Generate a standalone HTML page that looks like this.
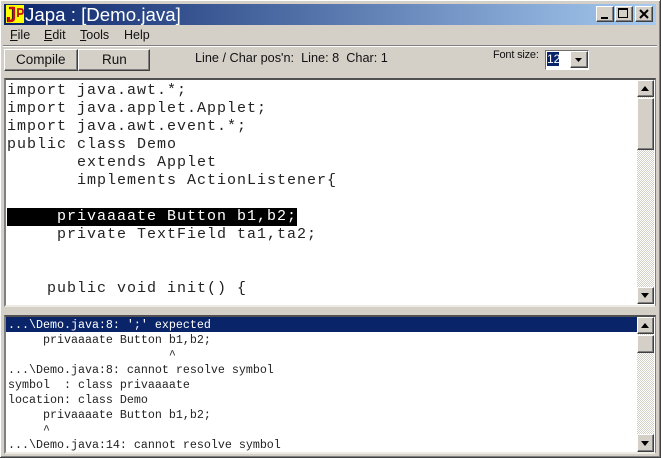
<!DOCTYPE html>
<html><head><meta charset="utf-8"><style>
html,body{margin:0;padding:0;width:661px;height:458px;overflow:hidden;background:#d4d0c8}
div,span{position:absolute;box-sizing:border-box}
#win{left:0;top:0;width:661px;height:458px;background:#d4d0c8;box-shadow:inset -1px -1px 0 #404040,inset 1px 1px 0 #fff,inset -2px -2px 0 #808080}
#in{left:0;top:1px;width:661px;height:457px}
.ui{font-family:"Liberation Sans",sans-serif;font-size:12.5px;color:#111;white-space:pre;line-height:14px}
.sep{height:2px;background:linear-gradient(#808080 50%,#fff 50%)}
.btn{background:#d4d0c8;border-top:1px solid #fff;border-left:1px solid #fff;border-right:1px solid #404040;border-bottom:1px solid #404040;box-shadow:inset -1px -1px 0 #808080}
.pane{background:#fff;border-top:2px solid #505050;border-left:2px solid #808080;border-right:1px solid #808080;border-bottom:2px solid #eeebe5}
.code{font-family:"Liberation Mono",monospace;font-size:15px;letter-spacing:1px;line-height:18px;white-space:pre;color:#222;left:7px;height:18px}
.out{font-family:"Liberation Mono",monospace;font-size:11.67px;line-height:15px;white-space:pre;color:#222;left:8px;height:15px}
.chk{background-color:#eeebe5;background-image:conic-gradient(#fff 25%,#d4d0c8 0 50%,#fff 0 75%,#d4d0c8 0);background-size:2px 2px}
u{text-decoration:underline}
</style></head><body>
<div id="win"><div id="in">
<div style="left:4px;top:3px;width:652px;height:21px;background:linear-gradient(90deg,#0a246a,#a6caf0)"></div>
<svg style="position:absolute;left:6px;top:4px" width="19" height="18" viewBox="0 0 19 18"><rect width="18" height="18" fill="#ffff00"/><path d="M4 3H9M8 3V13Q8 16 5 16H3V12" fill="none" stroke="#222" stroke-width="2.2" transform="translate(-1 0)"/><path d="M4 3H9M8 3V13Q8 16 5 16H3V12" fill="none" stroke="#d01010" stroke-width="2.2"/><path d="M12 12V4H15Q17 4 17 6.500T15 9H12" fill="none" stroke="#c01010" stroke-width="1.800"/></svg>
<div style="left:25px;top:4px;font:18.7px/20px 'Liberation Sans',sans-serif;color:#fff;white-space:pre">Japa : [Demo.java]</div>
<div class="btn" style="left:596px;top:5px;width:18px;height:16px"></div>
<div style="left:601px;top:16px;width:7px;height:2px;background:#000"></div>
<div class="btn" style="left:615px;top:5px;width:18px;height:16px"></div>
<div style="left:618px;top:7px;width:10px;height:10px;border:1px solid #000;border-top-width:2px"></div>
<div class="btn" style="left:635px;top:5px;width:18px;height:16px"></div>
<svg style="position:absolute;left:639px;top:8px" width="11" height="10"><path d="M1 1L9 9M9 1L1 9" stroke="#000" stroke-width="2"/></svg>

<div class="ui" style="left:10px;top:27px"><u>F</u>ile</div>
<div class="ui" style="left:44px;top:27px"><u>E</u>dit</div>
<div class="ui" style="left:80px;top:27px"><u>T</u>ools</div>
<div class="ui" style="left:124px;top:27px">Help</div>
<div class="sep" style="left:3px;top:44px;width:654px"></div>

<div class="btn" style="left:4px;top:48px;width:74px;height:22px"></div>
<div class="ui" style="left:16px;top:52px;font-size:13.5px">Compile</div>
<div class="btn" style="left:78px;top:48px;width:72px;height:22px"></div>
<div class="ui" style="left:102px;top:52px;font-size:13.5px">Run</div>
<div class="ui" style="left:195px;top:50px;font-size:12.7px">Line / Char pos'n:  Line: 8  Char: 1</div>

<div class="ui" style="left:493px;top:47px;font-size:11px;letter-spacing:-.2px">Font size:</div>
<div style="left:545px;top:49px;width:44px;height:20px;background:#fff;border-top:1px solid #707070;border-left:1px solid #707070;border-right:1px solid #fff;border-bottom:1px solid #fff"></div>
<div style="left:547px;top:51px;width:12px;height:14px;background:#0a246a;color:#fff;font:12px/14px 'Liberation Sans',sans-serif">12</div>
<div class="btn" style="left:570px;top:50px;width:18px;height:17px"></div>
<svg style="position:absolute;left:575px;top:57px" width="8" height="5"><path d="M0 0H7L3.500 4Z" fill="#000"/></svg>

<div class="pane" style="left:4px;top:77px;width:652px;height:229px"></div>
<div class="code" style="top:81px">import java.awt.*;</div>
<div class="code" style="top:99px">import java.applet.Applet;</div>
<div class="code" style="top:117px">import java.awt.event.*;</div>
<div class="code" style="top:135px">public class Demo</div>
<div class="code" style="top:153px">       extends Applet</div>
<div class="code" style="top:171px">       implements ActionListener{</div>
<div style="left:7px;top:207px;width:290px;height:18px;background:#000"></div>
<div class="code" style="top:207px;color:#fff">     privaaaate Button b1,b2;</div>
<div class="code" style="top:225px">     private TextField ta1,ta2;</div>
<div class="code" style="top:279px">    public void init() {</div>

<div class="chk" style="left:637px;top:79px;width:17px;height:224px"></div>
<div class="btn" style="left:637px;top:79px;width:17px;height:17px"></div>
<svg style="position:absolute;left:641px;top:85px" width="9" height="5"><path d="M0 5H8L4 0Z" fill="#000"/></svg>
<div class="btn" style="left:637px;top:97px;width:17px;height:52px"></div>
<div class="btn" style="left:637px;top:286px;width:17px;height:17px"></div>
<svg style="position:absolute;left:641px;top:292px" width="9" height="5"><path d="M0 0H8L4 5Z" fill="#000"/></svg>

<div class="pane" style="left:4px;top:314px;width:652px;height:139px"></div>
<div style="left:6px;top:316px;width:631px;height:15px;background:#0a246a"></div>
<div class="out" style="top:317px;color:#fff">...\Demo.java:8: ';' expected</div>
<div class="out" style="top:332px">     privaaaate Button b1,b2;</div>
<div class="out" style="top:347px">                       ^</div>
<div class="out" style="top:362px">...\Demo.java:8: cannot resolve symbol</div>
<div class="out" style="top:377px">symbol  : class privaaaate</div>
<div class="out" style="top:392px">location: class Demo</div>
<div class="out" style="top:407px">     privaaaate Button b1,b2;</div>
<div class="out" style="top:422px">     ^</div>
<div class="out" style="top:437px">...\Demo.java:14: cannot resolve symbol</div>

<div class="chk" style="left:637px;top:316px;width:17px;height:135px"></div>
<div class="btn" style="left:637px;top:316px;width:17px;height:17px"></div>
<svg style="position:absolute;left:641px;top:322px" width="9" height="5"><path d="M0 5H8L4 0Z" fill="#000"/></svg>
<div class="btn" style="left:637px;top:334px;width:17px;height:18px"></div>
<div class="btn" style="left:637px;top:433px;width:17px;height:18px"></div>
<svg style="position:absolute;left:641px;top:440px" width="9" height="5"><path d="M0 0H8L4 5Z" fill="#000"/></svg>
</div></div>
</body></html>
